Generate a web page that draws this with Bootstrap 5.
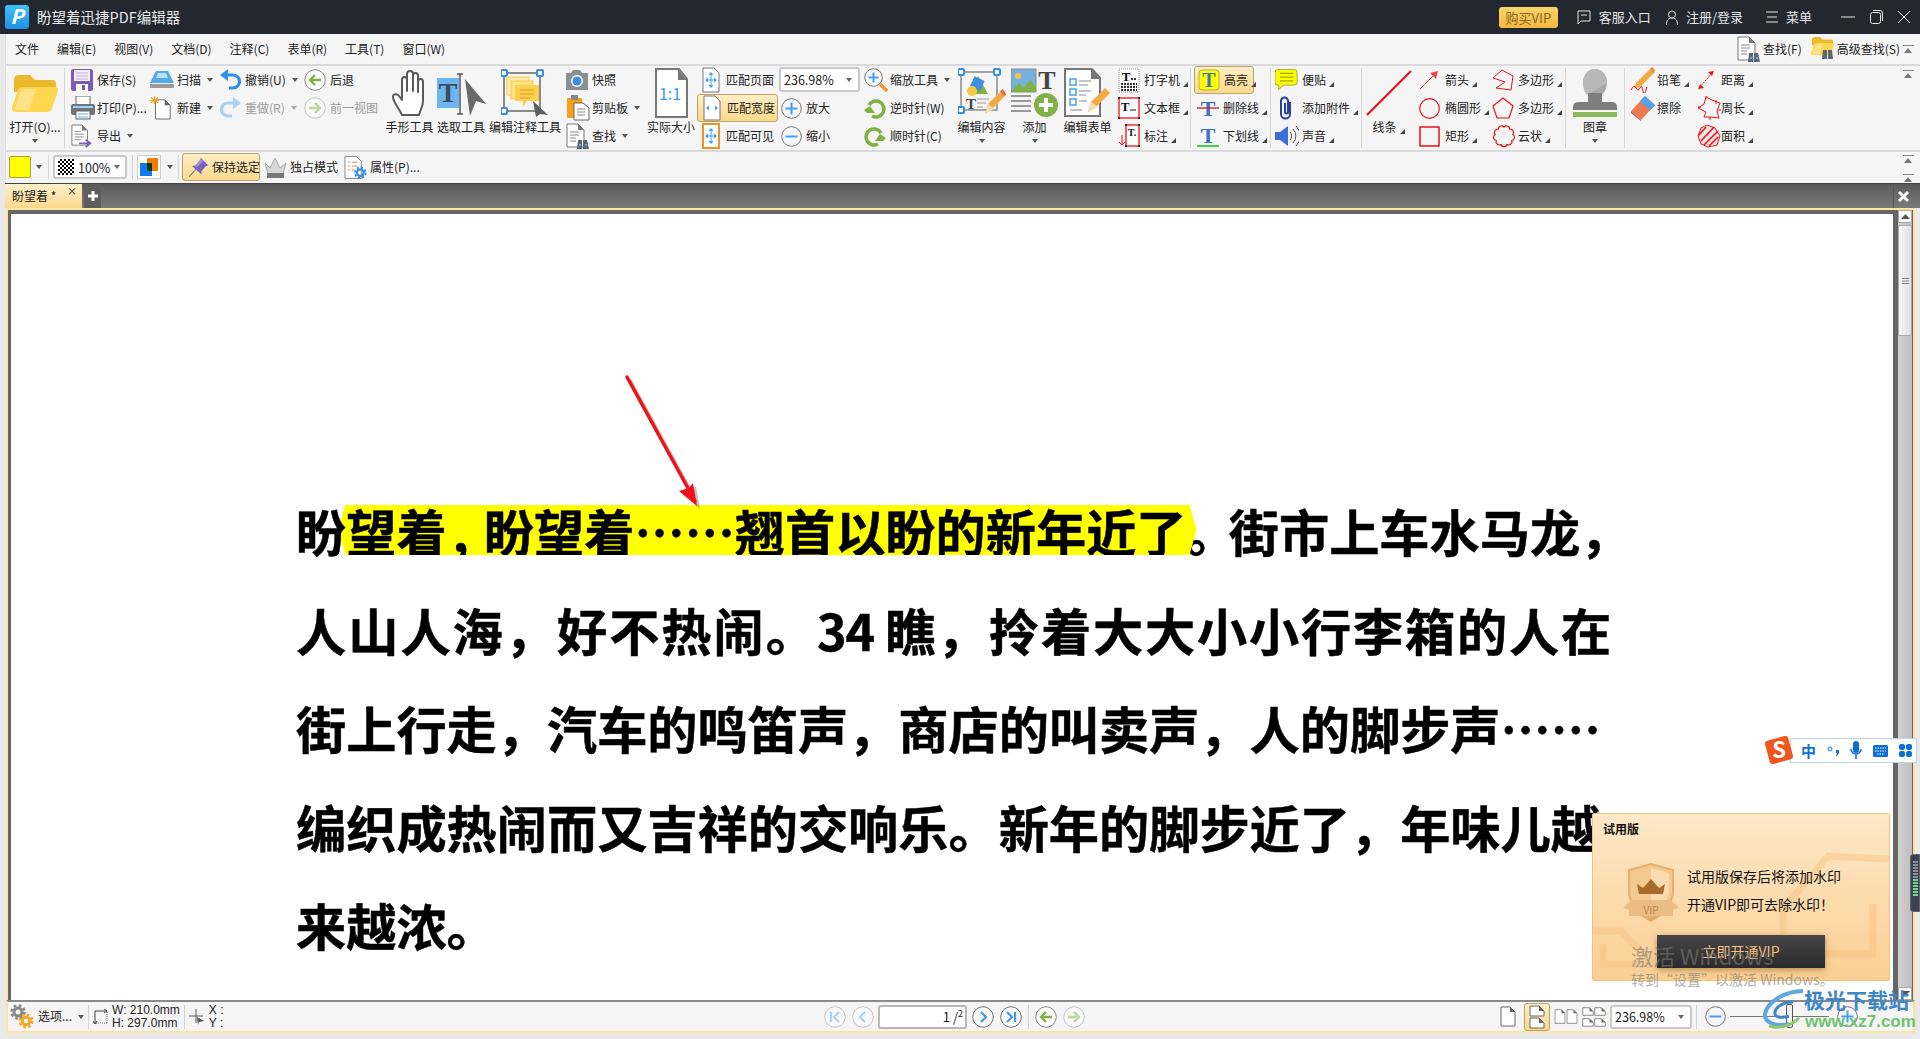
<!DOCTYPE html>
<html lang="zh-CN">
<head>
    <meta charset="UTF-8">
    <title>盼望着迅捷PDF编辑器</title>
    <link href="https://cdn.jsdelivr.net/npm/bootstrap@5.3.0/dist/css/bootstrap.min.css" rel="stylesheet">
    <style>
        html, body { margin: 0; height: 100%; overflow: hidden; background: #e9e9e9; }
        body, svg text { font-family: "Noto Sans CJK SC", "Liberation Sans", sans-serif; }
        svg text.sf { font-family: "Liberation Serif", serif; font-weight: 700; }
        body { font-size: 12px; color: #222; line-height: 1.2; }
        svg { display: block; flex: none; overflow: visible; }
        .appshell { width: 1920px; height: 1039px; position: relative; overflow: hidden; }

        /* title bar */
        .titlebar { height: 34px; background: #23272f; color: #e8e8e8; }
        .titlebar .apptitle { font-size: 14.5px; margin-left: 8px; }
        .logo-p { margin-left: 5px; }
        .vipbtn { width: 59px; height: 21px; margin-right: 19px; padding: 0; border: 0; border-radius: 3px; font-size: 13px; line-height: 21px; color: #8a6420; background: linear-gradient(#fbd46a, #f4b93f); }
        .vipbtn:hover { color: #8a6420; }
        .titlebar .tsp { font-size: 13px; margin-left: 8px; }
        .tgroup { margin-right: 15px; }
        .tgroup.wide { margin-right: 23px; }
        .winbtns { gap: 15px; margin-right: 10px; margin-left: 29px; }

        /* upper frame */
        .frame { margin-left: 5px; border-left: 1px solid #dcdcdc; background: #f5f5f5; }
        .menurow { height: 30px; padding-left: 9px; gap: 18px; font-size: 12px; }
        .menurow .findr { gap: 3px; }
        .upb { width: 11px; height: 8px; border-top: 1px solid #888; position: relative; margin: 0 6px 0 0; }
        .upb::after { content: ""; position: absolute; left: 1px; top: 2px; border: 4.5px solid transparent; border-top: 0; border-bottom: 5px solid #777; }
        .ribbon { height: 88px; border-top: 2px solid #dadada; border-bottom: 2px solid #dadada; }
        .rsep { width: 1px; height: 80px; margin-top: 2px; background: #d6d6d6; flex: none; }
        .rcol { flex: none; }
        .ritem { height: 28px; display: grid; grid-template-columns: var(--tx) auto auto; justify-content: start; align-items: center; white-space: nowrap; }
        .ritem > svg { margin-left: var(--px); }
        .ritem.off span { color: #9c9c9c; }
        .ritem.lit { background: linear-gradient(#fdeec4, #fbd98c); border: 1px solid #b9a36c; border-radius: 3px; }
        .crt { width: 0; height: 0; border: 3.5px solid transparent; border-bottom: 0; border-top: 4px solid #555; margin-left: 6px; display: block; }
        .crt.pale { border-top-color: #aaa; }
        .cnr { width: 0; height: 0; border-left: 5px solid transparent; border-bottom: 5px solid #444; margin: 8px 0 0 3px; display: block; }
        .bigt { display: flex; flex-direction: column; align-items: center; flex: none; padding-top: 2px; white-space: nowrap; }
        .bigt .bigbox { height: 50px; display: flex; align-items: center; }
        .bigt .biglab { height: 18px; line-height: 18px; display: flex; align-items: center; }
        .bigt .crt { margin: 3px 0 0; }
        .c0 { width: 58px; } .c1 { width: 81px; --tx: 32px; --px: 6px; } .c2 { width: 70px; --tx: 31px; --px: 4px; }
        .c3 { width: 84px; --tx: 29px; --px: 4px; } .c4 { width: 84px; --tx: 30px; --px: 4px; }
        .c5 { width: 51px; } .c6 { width: 52px; } .c7 { width: 76px; }
        .c8 { width: 82px; --tx: 29px; --px: 3px; } .c9 { width: 52px; }
        .c10 { width: 81px; --tx: 29px; --px: 5px; } .c11 { width: 84px; --tx: 28px; --px: 3px; }
        .c12 { width: 93px; --tx: 28px; --px: 2px; } .c13, .c14, .c15 { width: 53px; }
        .c16 { width: 76px; --tx: 30px; --px: 4px; } .c17 { width: 79px; --tx: 29px; --px: 3px; }
        .c17 .ritem { margin-left: 3px; } .c17 .ritem.lit { width: 60px; }
        .c18 { width: 90px; --tx: 31px; --px: 4px; } .c19 { width: 53px; }
        .c20 { width: 74px; --tx: 30px; --px: 4px; } .c21 { width: 76px; --tx: 29px; --px: 3px; }
        .c22 { width: 58px; } .c23 { width: 68px; --tx: 32px; --px: 6px; } .c24 { width: 74px; --tx: 28px; --px: 4px; }
        .combo { height: 25px; background: #fff; border: 2px solid #c9c9c9; border-radius: 3px; padding: 0 6px 0 3px; font-size: 12.5px; }
        .combo .crt { margin-left: auto; border-top-color: #666; }
        .c11 .combo { width: 81px; margin: 1px 0 2px 1px; }

        .tool2 { height: 31px; font-size: 12px; padding: 0 0 1px 3px; }
        .tool2 .vsep { width: 1px; height: 24px; background: #d4d4d4; flex: none; }
        .swatch { width: 22px; height: 22px; background: #ff0; border: 1px solid #a3a33a; border-radius: 2px; }
        .tool2 .combo { width: 74px; height: 24px; margin-left: 4px; gap: 4px; }
        .checker { width: 16px; height: 16px; background: conic-gradient(#000 25%, #fff 0 50%, #000 0 75%, #fff 0) 0 0 / 4px 4px; flex: none; }
        .colorbox { width: 24px; height: 24px; margin-left: 4px; padding: 2px; border: 1px solid #ccc; background: #fff; }
        .keepbtn { width: 78px; height: 28px; margin-left: 3px; padding-left: 6px; gap: 3px; background: linear-gradient(#fdeec4, #fbd98c); border: 1px solid #b9a36c; border-radius: 3px; white-space: nowrap; }
        .ml5 { margin-left: 5px; } .ml6 { margin-left: 6px; } .ml4 { margin-left: 4px; }
        .tool2 .tx { margin-left: 3px; white-space: nowrap; }
        .upstack { height: 31px; margin-left: auto; padding: 3px 0 1px; }

        /* tabs */
        .tabbar { height: 25px; background: linear-gradient(#555 0, #5f5f5f 10%, #7a7a7a 100%); border-top: 1px solid #444; margin-left: 5px; }
        .doctab { width: 77px; height: 24px; background: linear-gradient(#fdf0cb, #fdd98c); padding-left: 7px; font-size: 12px; position: relative; }
        .doctab .x { position: absolute; right: 5px; top: 1px; font-size: 10px; line-height: 12px; }
        .addtab { width: 17px; height: 24px; margin-left: 2px; background: #5e5e5e; }
        .closeall { width: 19px; margin-left: auto; margin-right: 8px; height: 24px; border-left: 1px solid #555; }

        /* document */
        .docarea { height: 792px; margin-left: 6px; margin-right: 5px; background: #666; border-left: 2px solid #fde3a0; border-top: 2px solid #fde3a0; border-right: 2px solid #fde3a0; }
        .docpage { width: 1882px; margin: 4px 0 0 3px; height: 786px; background: #fff; position: relative; overflow: hidden; padding: 267px 0 0 285px; }
        .docline { font-size: 50.2px; font-weight: 700; line-height: 98.6px; height: 98.6px; white-space: nowrap; color: #000; -webkit-text-stroke: .5px #000; }
        .ontop { position: relative; z-index: 1; }
        .hilite { margin: 0 -10px 0 -8px; padding: 0 10px 0 8px; background: linear-gradient(#ff0, #ff0) center / 100% 51px no-repeat; clip-path: polygon(0 50%, 7px 11px, calc(100% - 7px) 11px, 100% 50%, calc(100% - 7px) calc(100% - 11px), 7px calc(100% - 11px)); }
        .cma { margin-left: 6px; letter-spacing: 15px; }
        .dot-tight { letter-spacing: -8px; }
        .spread1 { letter-spacing: 2px; }
        .spread2 { letter-spacing: 1.8px; }
        .digits { margin: 0 11px 0 -1px; letter-spacing: -1px; }
        .redarrow { position: absolute; left: 600px; top: 150px; }
        .vscroll { width: 14px; margin-left: 5px; flex: none; background: linear-gradient(90deg, #d2d2d2, #bdbdbd); }
        .vscroll .sb { height: 13px; background: #fdfdfd; border: 1px solid #aaa; }
        .vscroll .thumb { height: 111px; margin-top: 2px; background: linear-gradient(90deg, #f6f6f6, #e0e0e0); border: 1px solid #aaa; }

        /* status bar */
        .statusbar { height: 33px; margin-left: 6px; margin-right: 5px; background: #f5f5f5; border-left: 2px solid #fde3a0; border-right: 2px solid #fde3a0; border-top: 2px solid #8a8a8a; border-bottom: 2px solid #fde3a0; font-size: 12px; }
        .stleft { width: 816px; flex: none; padding-left: 2px; }
        .stsep { width: 1px; height: 24px; background: #d4d4d4; flex: none; }
        .dim { font-family: "Liberation Sans", sans-serif; line-height: 13px; font-size: 12px; white-space: pre; }
        .pagein { width: 89px; height: 24px; margin: 0 5px 0 4px; background: #fff; border: 2px solid #b8b8b8; border-radius: 3px; padding-right: 2px; font-size: 13px; }
        .pagein sup { font-size: 9px; top: -.3em; }
        .navgap { gap: 6px; }
        .viewlit { width: 26px; height: 28px; background: linear-gradient(#fdeec4, #fbd98c); border: 1px solid #b9a36c; border-radius: 3px; }
        .pg-first { margin-left: 415px; }
        .pg-grid { display: grid; grid-template-columns: 12px 12px; }
        .strt .combo { width: 82px; height: 24px; }
        .sliderline { width: 99px; height: 1px; background: #777; position: relative; }
        .sliderline i { position: absolute; left: 56px; top: -12px; width: 7px; height: 24px; background: #f4f4f4; border: 1px solid #555; border-radius: 2px; }

        /* things floating over the window */
        .ime { position: absolute; left: 1790px; top: 738px; width: 127px; height: 25px; background: #fff; border: 1px solid #bcd4f2; padding-left: 10px; color: #0a6fd8; font-weight: 700; }
        .ime svg { margin-left: 11px; }
        .ime-s { position: absolute; left: 1764px; top: 735px; }
        .imezh { font-size: 15px; }
        .levelbar { position: absolute; left: 1910px; top: 854px; width: 10px; height: 58px; background: #3a4150; border-radius: 3px 0 0 3px; border: 1px solid #666; padding: 6px 1px 0 2px; }
        .levelbar i { display: block; height: 2px; margin-bottom: 1px; background: #8a8f99; }
        .levelbar i.g { background: #72d690; }
        .trialpop { position: absolute; left: 1592px; top: 813px; width: 298px; height: 168px; background: linear-gradient(#fde8c8, #fbcf92); border: 1px solid #f1c27f; border-radius: 2px; font-size: 14px; color: #111; }
        .trialpop .ttl { position: absolute; left: 10px; top: 8px; font-size: 12px; font-weight: 700; }
        .trialpop .msg { position: absolute; left: 94px; top: 48px; line-height: 28px; white-space: nowrap; }
        .trialpop .deco { position: absolute; left: 0; top: 0; }
        .trialpop .shield { position: absolute; left: 30px; top: 50px; }
        .openvip { position: absolute; left: 64px; top: 121px; width: 168px; height: 33px; border: 0; padding: 0; border-radius: 0; background: linear-gradient(#474747, #2a2a2a); color: #f3c27e; font-size: 14px; box-shadow: 0 2px 6px rgba(120,80,20,.5); }
        .wm-act { position: absolute; left: 1631px; top: 940px; color: rgba(120,120,120,.62); font-size: 22px; white-space: nowrap; line-height: 30px; }
        .wm-sub { position: absolute; left: 1631px; top: 969px; color: rgba(120,120,120,.62); font-size: 14px; white-space: nowrap; line-height: 20px; }
        .jg-logo { position: absolute; left: 1763px; top: 990px; }
        .jg-cn { position: absolute; left: 1804px; top: 984px; color: #3f86c9; font-size: 21px; font-weight: 700; white-space: nowrap; line-height: 30px; }
        .jg-en { position: absolute; left: 1805px; top: 1010px; color: #6fc36f; font-size: 17px; font-weight: 700; font-family: "Liberation Sans", sans-serif; white-space: nowrap; line-height: 24px; }
    </style>
</head>
<body>
<svg width="0" height="0" class="position-absolute">
    <defs>
        <symbol id="folder" viewBox="0 0 46 37"><path d="M2 5q0-5 5-5h11l5 5h17q4 0 4 4v8H2z" fill="#ecb92c"/><path d="M0 32L6 15q1-3 4-3h33q4 0 3 4l-6 17q-1 4-5 4H4q-5 0-4-5z" fill="#fdd74f"/><path d="M3 33L9 16q1-2 3-2h12L17 35H6q-4 0-3-2z" fill="#fee38a"/></symbol>
        <symbol id="save" viewBox="0 0 22 22"><rect width="22" height="22" rx="2" fill="#7a5cb9"/><rect x="3" y="1" width="16" height="11" fill="#f3f0fa"/><path d="M5 4h12M5 7h12M5 10h12" stroke="#b9add9"/><rect x="5" y="15" width="12" height="7" fill="#fff"/><rect x="11" y="16" width="3" height="5" fill="#7a5cb9"/></symbol>
        <symbol id="print" viewBox="0 0 24 24"><rect x="5" y="0" width="14" height="9" fill="#fff" stroke="#666"/><rect x="0" y="8" width="24" height="11" rx="2" fill="#6f7478"/><rect x="2" y="10" width="20" height="2" fill="#9fd0f5"/><rect x="5" y="15" width="14" height="8" fill="#fff" stroke="#666"/><path d="M7 18h10M7 21h10" stroke="#69aee8"/></symbol>
        <symbol id="scan" viewBox="0 0 24 18"><path d="M6 0h12l6 12H0z" fill="#53a9ee"/><path d="M8 2h8l2 5H6z" fill="#bfe0fa"/><rect y="13" width="24" height="4" rx="1" fill="#9a9a9a"/></symbol>
        <symbol id="newd" viewBox="0 0 24 26"><path d="M6 4h10l6 6v15H6z" fill="#fff" stroke="#666"/><path d="M16 4v6h6z" fill="#666"/><path d="M5 0v9M1 1.500l8 6M9 1.500l-8 6M0 4.500h10" stroke="#f4a11f" stroke-width="1.200"/></symbol>
        <symbol id="export" viewBox="0 0 24 26"><path d="M1 1h11l6 6v16H1z" fill="#fff" stroke="#777"/><path d="M12 1v6h6z" fill="#777"/><path d="M4 8h7M4 11h10M4 14h10M4 17h7" stroke="#888"/><path d="M9 21h11m-4-4l5 4-5 4" fill="none" stroke="#7a5cb9" stroke-width="2"/></symbol>
        <symbol id="undo" viewBox="0 0 21 22"><path d="M6 6h7a6 6 0 0 1 0 13H9" fill="none" stroke="#2f90e8" stroke-width="3.200"/><path d="M8 0v12L0 6z" fill="#2f90e8"/></symbol>
        <symbol id="redo" viewBox="0 0 21 22"><path d="M15 6H8a6 6 0 0 0 0 13h4" fill="none" stroke="#a8d3f6" stroke-width="3.200"/><path d="M13 0v12l8-6z" fill="#a8d3f6"/></symbol>
        <symbol id="back" viewBox="0 0 22 22"><circle cx="11" cy="11" r="10.300" fill="#fff" stroke="#888"/><path d="M17 11H6m5-5l-5 5 5 5" fill="none" stroke="#7fb143" stroke-width="2.400"/></symbol>
        <symbol id="fwd" viewBox="0 0 22 22"><circle cx="11" cy="11" r="10.300" fill="#fafafa" stroke="#c4c4c4"/><path d="M5 11h11m-5-5l5 5-5 5" fill="none" stroke="#bcd79a" stroke-width="2.400"/></symbol>
        <symbol id="hand" viewBox="0 0 36 48"><path d="M10 46C7 39 1 33 1 28c0-3 4-4 6-1l3 4V11c0-4 5-4 5 0v11V5c0-4 6-4 6 0v17V7c0-4 5-4 5 0v16V13c0-4 5-4 5 0v19c0 6-3 9-4 14z" fill="#fff" stroke="#5a5a5a" stroke-width="2" stroke-linejoin="round"/></symbol>
        <symbol id="sel" viewBox="0 0 49 48"><rect y="9" width="22" height="30" fill="#6cb5f2"/><text class="sf" x="11" y="33" text-anchor="middle" font-size="28" fill="#3d4b57">T</text><path d="M23 5v40M20 5h6M20 45h6" stroke="#555" stroke-width="1.500"/><path d="M28 10l21 25-10-3-6 15z" fill="#696969"/></symbol>
        <symbol id="annot" viewBox="0 0 48 48"><rect x="3" y="4" width="36" height="38" fill="none" stroke="#8a8a8a" stroke-width="2"/><g fill="#fff" stroke="#2f90e8" stroke-width="2"><rect x="0" y="1" width="6" height="6" rx="1"/><rect x="36" y="1" width="6" height="6" rx="1"/><rect x="0" y="39" width="6" height="6" rx="1"/></g><rect x="6" y="8" width="22" height="18" fill="#ffeeb0" stroke="#f4c64a"/><rect x="10" y="12" width="22" height="18" fill="#ffe28a" stroke="#f4c64a"/><path d="M14 16h24v16H26l-4 6v-6h-8z" fill="#fccf4c"/><path d="M19 21h14M19 25h14M19 29h10" stroke="#e39c25"/><path d="M32 32l15 14-8-1-4 3z" fill="#5e5e5e"/></symbol>
        <symbol id="cam" viewBox="0 0 22 20"><path d="M0 3h5l2-3h7l2 3h6v17H0z" fill="#8a8f93"/><circle cx="11" cy="11" r="6" fill="#fff"/><circle cx="11" cy="11" r="4.500" fill="#3d8fdf"/></symbol>
        <symbol id="clip" viewBox="0 0 24 26"><rect x="1" y="3" width="15" height="20" rx="1" fill="#f6a01e"/><rect x="5" y="0" width="7" height="5" fill="#888"/><path d="M8 8h9l6 5v12H8z" fill="#fff" stroke="#666"/><path d="M11 14h8M11 17h8M11 20h8" stroke="#888"/></symbol>
        <symbol id="find" viewBox="0 0 23 26"><path d="M1 1h11l6 6v17H1z" fill="#fff" stroke="#777"/><path d="M12 1v6h6z" fill="#777"/><path d="M4 9h9M4 12h9M4 15h6M4 18h6" stroke="#888"/><path d="M12 17h4v9h-5zM17 17h4l2 9h-6z" fill="#5a6670"/><path d="M13 22h2M19 22h2" stroke="#64a8e8" stroke-width="2"/></symbol>
        <symbol id="one" viewBox="0 0 34 50"><path d="M2 1h23l8 10v38H2z" fill="#fff" stroke="#777" stroke-width="2"/><path d="M24 1v11h9z" fill="#777"/><text x="16" y="32" text-anchor="middle" font-size="16" fill="#3a9bf0">1:1</text></symbol>
        <symbol id="fitp" viewBox="0 0 18 26"><path d="M1 1h11l5 5v19H1z" fill="#fff" stroke="#777"/><path d="M9 6v14M4 13h10" stroke="#45a1ef"/><path d="M9 5l-2.500 3h5zM9 21l-2.500-3h5zM3 13l3-2.500v5zM15 13l-3-2.500v5z" fill="#45a1ef"/></symbol>
        <symbol id="fitw" viewBox="0 0 18 26"><path d="M1 1h11l5 5v19H1z" fill="#fff" stroke="#777"/><path d="M3 13l3-2.500v5zM15 13l-3-2.500v5z" fill="#45a1ef"/></symbol>
        <symbol id="fitv" viewBox="0 0 18 26"><rect x="1" y="1" width="16" height="24" fill="#fff" stroke="#ef9322" stroke-width="2"/><path d="M9 6v14M4 13h10" stroke="#45a1ef"/><path d="M9 5l-2.500 3h5zM9 21l-2.500-3h5zM3 13l3-2.500v5zM15 13l-3-2.500v5z" fill="#45a1ef"/></symbol>
        <symbol id="plus" viewBox="0 0 21 21"><circle cx="10.500" cy="10.500" r="9.800" fill="#f6f6f6" stroke="#777"/><path d="M10.500 4.500v12M4.500 10.500h12" stroke="#45a1ef" stroke-width="2"/></symbol>
        <symbol id="minus" viewBox="0 0 21 21"><circle cx="10.500" cy="10.500" r="9.800" fill="#f6f6f6" stroke="#777"/><path d="M4.500 10.500h12" stroke="#45a1ef" stroke-width="2"/></symbol>
        <symbol id="zoomt" viewBox="0 0 24 24"><circle cx="9.500" cy="9.500" r="8.800" fill="#f6f6f6" stroke="#777"/><path d="M9.500 4.500v10M4.500 9.500h10" stroke="#45a1ef" stroke-width="2"/><path d="M16 16l7 7" stroke="#f0992a" stroke-width="3.500"/></symbol>
        <symbol id="ccw" viewBox="0 0 22 22"><path d="M5 8a8 8 0 1 1 3 11" fill="none" stroke="#7fb143" stroke-width="3.500"/><path d="M0 13l6-4 5 7H3z" fill="#7fb143"/></symbol>
        <symbol id="cw" viewBox="0 0 22 22"><path d="M17 8a8 8 0 1 0-3 11" fill="none" stroke="#7fb143" stroke-width="3.500"/><path d="M22 13l-6-4-5 7h8z" fill="#7fb143"/></symbol>
        <symbol id="edc" viewBox="0 0 48 50"><rect x="3" y="4" width="36" height="38" fill="none" stroke="#8a8a8a" stroke-width="1.500"/><g fill="#fff" stroke="#2f90e8" stroke-width="2"><rect x="0" y="1" width="6" height="6" rx="1"/><rect x="36" y="1" width="6" height="6" rx="1"/><rect x="0" y="39" width="6" height="6" rx="1"/></g><path d="M20 8l10 18H14z" fill="#7fb143"/><rect x="14" y="10" width="11" height="11" fill="#3d8fdf" transform="rotate(25 19 15)"/><circle cx="14" cy="23" r="5" fill="#f6c644"/><text class="sf" x="8" y="41" font-size="15" fill="#444">T</text><path d="M19 31h12M19 35h9M19 39h6" stroke="#999"/><path d="M27 46l3-10 14-14 4 5-14 14z" fill="#f5a943"/><path d="M42 23l3-2 3 5-2 2z" fill="#ea6a4f"/><path d="M27 46l3-10 6 5z" fill="#f6dcb2"/></symbol>
        <symbol id="addc" viewBox="0 0 47 50"><rect y="1" width="25" height="23" fill="#78b0dd" stroke="#8a8a8a"/><circle cx="7" cy="8" r="3" fill="#f6c644"/><path d="M0 24l8-9 5 5 6-8 6 7v5z" fill="#7fb143"/><text class="sf" x="36" y="21" text-anchor="middle" font-size="26" fill="#444">T</text><path d="M0 28h20M0 33h20M0 38h20M0 43h20" stroke="#999" stroke-width="1.800"/><circle cx="35" cy="37" r="12" fill="#80b248"/><path d="M35 30v14M28 37h14" stroke="#fff" stroke-width="4"/></symbol>
        <symbol id="edf" viewBox="0 0 47 50"><path d="M1 1h27l8 9v38H1z" fill="#fff" stroke="#777" stroke-width="2"/><path d="M27 1v10h9z" fill="#777"/><g fill="none" stroke="#45a1ef" stroke-width="1.500"><rect x="6" y="11" width="6" height="6"/><rect x="6" y="21" width="6" height="6"/><rect x="6" y="31" width="6" height="6"/></g><path d="M15 13h12M15 17h9M15 23h12M15 27h7M15 33h8M6 42h12" stroke="#888"/><path d="M24 44l3-10 14-14 5 5-14 14z" fill="#f5a943"/><path d="M24 44l3-10 7 5z" fill="#f6dcb2"/></symbol>
        <symbol id="typ" viewBox="0 0 22 25"><rect x="1" y="1" width="20" height="23" fill="#fff" stroke="#999" stroke-dasharray="1 1"/><text class="sf" x="8" y="13" text-anchor="middle" font-size="13" fill="#111">T</text><path d="M13 11h6M3 16h16M3 19h16M3 22h16" stroke="#333" stroke-width="2" stroke-dasharray="2 1"/></symbol>
        <symbol id="tb" viewBox="0 0 22 22"><rect x="1" y="1" width="20" height="20" fill="#fff" stroke="#e11" stroke-width="1.300"/><text class="sf" x="7" y="14" text-anchor="middle" font-size="13" fill="#111">T</text><path d="M12 13h6" stroke="#111"/><g fill="#333"><rect width="2" height="2"/><rect x="20" width="2" height="2"/><rect y="20" width="2" height="2"/><rect x="20" y="20" width="2" height="2"/></g></symbol>
        <symbol id="call" viewBox="0 0 22 24"><rect x="8" y="1" width="13" height="21" fill="#fff" stroke="#e11" stroke-width="1.300"/><text class="sf" x="14" y="12" text-anchor="middle" font-size="10" fill="#111">T.</text><path d="M4 11v10m-3-3l3 3 3-3" fill="none" stroke="#e11"/><g fill="#333"><rect x="7" width="2" height="2"/><rect x="20" width="2" height="2"/><rect x="7" y="21" width="2" height="2"/><rect x="20" y="21" width="2" height="2"/></g></symbol>
        <symbol id="thl" viewBox="0 0 22 22"><rect x="1" y="1" width="20" height="20" rx="3" fill="#ff0" stroke="#b5b04a"/><text class="sf" x="11" y="18" text-anchor="middle" font-size="20" fill="#3973c4">T</text></symbol>
        <symbol id="tst" viewBox="0 0 22 22"><text class="sf" x="11" y="19" text-anchor="middle" font-size="22" fill="#3973c4">T</text><path d="M0 11h22" stroke="#d8222a" stroke-width="1.400"/></symbol>
        <symbol id="tun" viewBox="0 0 22 22"><text class="sf" x="11" y="18" text-anchor="middle" font-size="22" fill="#3973c4">T</text><path d="M0 21h22" stroke="#2fd02f" stroke-width="1.800"/></symbol>
        <symbol id="note" viewBox="0 0 24 22"><path d="M3 0h18q3 0 3 3v11q0 3-3 3H9l-5 5v-5H3q-3 0-3-3V3q0-3 3-3z" fill="#ff0" stroke="#a3a33a" transform="scale(.96)"/><path d="M5 4h14M5 8h14M5 12h14" stroke="#888800"/></symbol>
        <symbol id="att" viewBox="0 0 12 24"><path d="M10 6v12a4.500 4.500 0 0 1-9 0V5a3.500 3.500 0 0 1 7 0v11a1.500 1.500 0 0 1-3 0V7" fill="none" stroke="#2b3f9e" stroke-width="2"/></symbol>
        <symbol id="spk" viewBox="0 0 24 22"><path d="M0 7h5l8-6v20l-8-6H0z" fill="#3f6fd6"/><path d="M15 7a6 6 0 0 1 0 8M18 4a10 10 0 0 1 0 14M21 1a14 14 0 0 1 0 20" fill="none" stroke="#555"/></symbol>
        <symbol id="line" viewBox="0 0 46 46"><path d="M1 45L45 1" stroke="#e8131a" stroke-width="2.200"/></symbol>
        <symbol id="arrow" viewBox="0 0 20 20"><path d="M1 19L18 2" stroke="#e8474c"/><path d="M19 1l-8 2 6 6z" fill="#e8474c"/></symbol>
        <symbol id="polyo" viewBox="0 0 22 22"><path d="M10 1l11 6-2 14-15-2 9-6L1 9z" fill="none" stroke="#e8131a" stroke-linejoin="round"/></symbol>
        <symbol id="ell" viewBox="0 0 21 21"><circle cx="10.500" cy="10.500" r="9.800" fill="none" stroke="#e8131a" stroke-width="1.200"/></symbol>
        <symbol id="penta" viewBox="0 0 22 22"><path d="M11 1l10 8-4 12H5L1 9z" fill="none" stroke="#e8131a" stroke-width="1.200"/></symbol>
        <symbol id="rect" viewBox="0 0 21 21"><rect x="1" y="1" width="19" height="19" fill="none" stroke="#e8131a" stroke-width="1.500"/></symbol>
        <symbol id="cloud" viewBox="0 0 24 24"><path d="M12 3A3.300 3.300 0 0 1 17.800 5.100A3.300 3.300 0 0 1 20.900 10.400A3.300 3.300 0 0 1 19.800 16.500A3.300 3.300 0 0 1 15.100 20.500A3.300 3.300 0 0 1 8.900 20.500A3.300 3.300 0 0 1 4.200 16.500A3.300 3.300 0 0 1 3.100 10.400A3.300 3.300 0 0 1 6.200 5.100A3.300 3.300 0 0 1 12 3z" fill="none" stroke="#e8131a" stroke-width="1.200"/></symbol>
        <symbol id="stamp" viewBox="0 0 44 48"><ellipse cx="22" cy="14" rx="12" ry="14" fill="#a9a9a9"/><path d="M22 0a12 14 0 0 1 12 14L14 26Q10 20 10 14A12 14 0 0 1 22 0z" fill="#b8b8b8"/><path d="M15 24h14v9h9q6 0 6 5v3H0v-3q0-5 6-5h9z" fill="#7e7e7e"/><rect y="43" width="44" height="5" fill="#8eb85c"/></symbol>
        <symbol id="pen" viewBox="0 0 24 26"><path d="M5 16L20 1l4 4L9 20l-6 1z" fill="#f5a943"/><path d="M19 2l2-2 3 3-2 3z" fill="#ea8a3f"/><path d="M0 23q3-6 5-2t4 0 3 3 4-4" fill="none" stroke="#e8131a"/></symbol>
        <symbol id="erase" viewBox="0 0 24 26"><path d="M0 16L14 1l10 9L10 25z" fill="#ee7a55"/><path d="M9 6L14 1l10 9-5 5z" fill="#4ea4ea"/><path d="M0 16l10 9v1L0 18z" fill="#b55"/></symbol>
        <symbol id="dist" viewBox="0 0 18 20"><path d="M2 18L16 2" stroke="#e8131a" stroke-dasharray="2 1"/><path d="M17 1l-6 1 4 4zM1 19l6-1-4-4z" fill="#e8131a"/></symbol>
        <symbol id="peri" viewBox="0 0 24 24"><path d="M9 1l6 3 8 3-3 8 2 7-9-1H7l2-5-8-4 6-4z" fill="none" stroke="#e8131a"/><path d="M9 0v3M19 4v4M21 14h3M13 21v3M1 11h3" stroke="#e8131a"/></symbol>
        <symbol id="area" viewBox="0 0 24 24"><path d="M10 1l8 3 5 8-3 9-9 2-7-3-3-8 3-8z" fill="#fde5e5" stroke="#e8131a"/><path d="M4 17L17 3M7 21L21 7M12 22l9-9M2 11L9 3" stroke="#e8131a" stroke-width="1.600"/></symbol>
        <symbol id="pin" viewBox="0 0 24 24"><path d="M0 24l9-10" stroke="#888" stroke-width="1.600"/><path d="M14 1l9 9-3 1-5 6 0 4L4 11l4-1 5-5z" fill="#7d5fc0"/><path d="M14 2l3 3-7 7-3-1z" fill="#a58ddc"/></symbol>
        <symbol id="crown" viewBox="0 0 23 23"><path d="M1 7l5 5 5-10 5 10 6-5-3 11H4z" fill="#d6d6d6" stroke="#aaa"/><rect x="3" y="17" width="17" height="5" fill="#777"/></symbol>
        <symbol id="prop" viewBox="0 0 24 25"><path d="M1 1h12l5 5v18H1z" fill="#fff" stroke="#888"/><path d="M4 7h2M8 7h6M4 11h2M8 11h6M4 15h2M8 15h3" stroke="#d85"/><g transform="translate(17 18)"><circle r="3.500" fill="none" stroke="#3f8fe0" stroke-width="2.500"/><circle r="5.500" fill="none" stroke="#3f8fe0" stroke-width="2" stroke-dasharray="2.300 2"/></g></symbol>
        <symbol id="gear" viewBox="0 0 24 26"><g transform="translate(8 8)"><circle r="4" fill="none" stroke="#888" stroke-width="3"/><circle r="6.500" fill="none" stroke="#888" stroke-width="2.500" stroke-dasharray="2.600 2.500"/></g><g transform="translate(16 17)"><circle r="3.800" fill="none" stroke="#f6a623" stroke-width="3"/><circle r="6.300" fill="none" stroke="#f6a623" stroke-width="2.500" stroke-dasharray="2.500 2.450"/></g></symbol>
        <symbol id="size" viewBox="0 0 15 16"><path d="M2 6V2h11M11 0l3 2-3 2M2 6v9M0 12l2 3 2-3" fill="none" stroke="#444"/><path d="M3 14h12M14 3v11" stroke="#666" stroke-dasharray="1 1"/></symbol>
        <symbol id="cross" viewBox="0 0 16 16"><path d="M7 0v14M0 7h14" stroke="#555"/><path d="M8 8l7 4-5 1-1 3z" fill="#555"/></symbol>
        <symbol id="first" viewBox="0 0 22 22"><circle cx="11" cy="11" r="10.300" fill="#fafafa" stroke="#c4c4c4"/><path d="M7 6v10M15 6l-5 5 5 5" fill="none" stroke="#a8d3f6" stroke-width="2.200"/></symbol>
        <symbol id="prev" viewBox="0 0 22 22"><circle cx="11" cy="11" r="10.300" fill="#fafafa" stroke="#c4c4c4"/><path d="M13 6l-5 5 5 5" fill="none" stroke="#a8d3f6" stroke-width="2.200"/></symbol>
        <symbol id="next" viewBox="0 0 22 22"><circle cx="11" cy="11" r="10.300" fill="#fafafa" stroke="#777"/><path d="M9 6l5 5-5 5" fill="none" stroke="#3f9af0" stroke-width="2.200"/></symbol>
        <symbol id="last" viewBox="0 0 22 22"><circle cx="11" cy="11" r="10.300" fill="#fafafa" stroke="#777"/><path d="M15 6v10M7 6l5 5-5 5" fill="none" stroke="#3f9af0" stroke-width="2.200"/></symbol>
        <symbol id="pg" viewBox="0 0 16 21"><path d="M1 1h9l5 5v14H1z" fill="#fff" stroke="#666"/><path d="M10 1v5h5z" fill="#666"/></symbol>
        <symbol id="pgc" viewBox="0 0 16 12"><path d="M1 1h9l5 5v5H1z" fill="#fff" stroke="#666"/><path d="M10 1v5h5z" fill="#666"/></symbol>
    </defs>
</svg>

<div class="appshell">
    <div class="titlebar d-flex align-items-center">
        <svg class="logo-p" width="24" height="24"><defs><linearGradient id="lg" x1="0" y1="0" x2="0" y2="1"><stop offset="0" stop-color="#3ec3f5"/><stop offset="1" stop-color="#1e90e8"/></linearGradient></defs><rect width="24" height="24" rx="3" fill="url(#lg)"/><text x="12" y="19" text-anchor="middle" font-size="20" font-weight="700" font-style="italic" fill="#fff">P</text></svg>
        <span class="apptitle">盼望着迅捷PDF编辑器</span>
        <div class="ms-auto d-flex align-items-center">
            <button class="btn vipbtn" type="button">购买VIP</button>
            <div class="d-flex align-items-center tgroup"><svg width="14" height="15" fill="none" stroke="#e8e8e8"><path d="M1 1h12v10H4l-3 3z"/><path d="M4 5h6"/></svg><span class="tsp">客服入口</span></div>
            <div class="d-flex align-items-center tgroup wide"><svg width="12" height="15" fill="none" stroke="#e8e8e8"><circle cx="6" cy="4.500" r="3.500"/><path d="M.500 15c0-5 2-7 5.500-7s5.500 2 5.500 7"/></svg><span class="tsp">注册/登录</span></div>
            <div class="d-flex align-items-center"><svg width="12" height="12" stroke="#e8e8e8"><path d="M0 1h12M1 6h10M0 11h12"/></svg><span class="tsp">菜单</span></div>
            <div class="d-flex align-items-center winbtns">
                <svg width="14" height="14" stroke="#e8e8e8"><path d="M0 7h14"/></svg>
                <svg width="13" height="14" fill="none" stroke="#e8e8e8"><rect x=".5" y="2.500" width="10" height="11" rx="2"/><path d="M3 .5h7q2.500 0 2.500 2.500v8"/></svg>
                <svg width="12" height="12" stroke="#e8e8e8"><path d="M0 0l12 12M12 0L0 12"/></svg>
            </div>
        </div>
    </div>

    <div class="frame">
        <div class="menurow d-flex align-items-center">
            <span>文件</span><span>编辑(E)</span><span>视图(V)</span><span>文档(D)</span><span>注释(C)</span><span>表单(R)</span><span>工具(T)</span><span>窗口(W)</span>
            <div class="ms-auto d-flex align-items-center findr">
                <svg width="23" height="26"><use href="#find"/></svg><span>查找(F)</span>
                <svg class="ml6" width="23" height="24" viewBox="0 0 46 48"><use href="#folder" width="46" height="37"/><path d="M24 26h8v18H22zM34 26h8l2 18H34z" fill="#5a6670"/></svg><span>高级查找(S)</span>
                <div class="upb"></div>
            </div>
        </div>

        <div class="ribbon d-flex">
            <div class="bigt c0"><div class="bigbox"><svg width="46" height="37"><use href="#folder"/></svg></div><div class="biglab">打开(O)...</div><i class="crt"></i></div>
            <div class="rsep"></div>
            <div class="rcol c1">
                <div class="ritem"><svg width="22" height="22"><use href="#save"/></svg><span>保存(S)</span></div>
                <div class="ritem"><svg width="24" height="24"><use href="#print"/></svg><span>打印(P)...</span></div>
                <div class="ritem"><svg width="22" height="24"><use href="#export"/></svg><span>导出</span><i class="crt"></i></div>
            </div>
            <div class="rcol c2">
                <div class="ritem"><svg width="24" height="18"><use href="#scan"/></svg><span>扫描</span><i class="crt"></i></div>
                <div class="ritem"><svg width="22" height="26"><use href="#newd"/></svg><span>新建</span><i class="crt"></i></div>
            </div>
            <div class="rcol c3">
                <div class="ritem"><svg width="21" height="22"><use href="#undo"/></svg><span>撤销(U)</span><i class="crt"></i></div>
                <div class="ritem off"><svg width="21" height="22"><use href="#redo"/></svg><span>重做(R)</span><i class="crt pale"></i></div>
            </div>
            <div class="rcol c4">
                <div class="ritem"><svg width="22" height="22"><use href="#back"/></svg><span>后退</span></div>
                <div class="ritem off"><svg width="22" height="22"><use href="#fwd"/></svg><span>前一视图</span></div>
            </div>
            <div class="bigt c5"><div class="bigbox"><svg width="36" height="48"><use href="#hand"/></svg></div><div class="biglab">手形工具</div></div>
            <div class="bigt c6"><div class="bigbox"><svg width="49" height="48"><use href="#sel"/></svg></div><div class="biglab">选取工具</div></div>
            <div class="bigt c7"><div class="bigbox"><svg width="48" height="48"><use href="#annot"/></svg></div><div class="biglab">编辑注释工具</div></div>
            <div class="rcol c8">
                <div class="ritem"><svg width="22" height="20"><use href="#cam"/></svg><span>快照</span></div>
                <div class="ritem"><svg width="24" height="26"><use href="#clip"/></svg><span>剪贴板</span><i class="crt"></i></div>
                <div class="ritem"><svg width="23" height="26"><use href="#find"/></svg><span>查找</span><i class="crt"></i></div>
            </div>
            <div class="bigt c9"><div class="bigbox"><svg width="34" height="50"><use href="#one"/></svg></div><div class="biglab">实际大小</div></div>
            <div class="rcol c10">
                <div class="ritem"><svg width="18" height="26"><use href="#fitp"/></svg><span>匹配页面</span></div>
                <div class="ritem lit"><svg width="18" height="26"><use href="#fitw"/></svg><span>匹配宽度</span></div>
                <div class="ritem"><svg width="18" height="26"><use href="#fitv"/></svg><span>匹配可见</span></div>
            </div>
            <div class="rcol c11">
                <div class="combo d-flex align-items-center"><span>236.98%</span><i class="crt"></i></div>
                <div class="ritem"><svg width="21" height="21"><use href="#plus"/></svg><span>放大</span></div>
                <div class="ritem"><svg width="21" height="21"><use href="#minus"/></svg><span>缩小</span></div>
            </div>
            <div class="rcol c12">
                <div class="ritem"><svg width="24" height="24"><use href="#zoomt"/></svg><span>缩放工具</span><i class="crt"></i></div>
                <div class="ritem"><svg width="22" height="22"><use href="#ccw"/></svg><span>逆时针(W)</span></div>
                <div class="ritem"><svg width="22" height="22"><use href="#cw"/></svg><span>顺时针(C)</span></div>
            </div>
            <div class="bigt c13"><div class="bigbox"><svg width="48" height="50"><use href="#edc"/></svg></div><div class="biglab">编辑内容</div><i class="crt"></i></div>
            <div class="bigt c14"><div class="bigbox"><svg width="47" height="50"><use href="#addc"/></svg></div><div class="biglab">添加</div><i class="crt"></i></div>
            <div class="bigt c15"><div class="bigbox"><svg width="47" height="50"><use href="#edf"/></svg></div><div class="biglab">编辑表单</div></div>
            <div class="rcol c16">
                <div class="ritem"><svg width="22" height="25"><use href="#typ"/></svg><span>打字机</span><i class="cnr"></i></div>
                <div class="ritem"><svg width="22" height="22"><use href="#tb"/></svg><span>文本框</span><i class="cnr"></i></div>
                <div class="ritem"><svg width="22" height="24"><use href="#call"/></svg><span>标注</span><i class="cnr"></i></div>
            </div>
            <div class="rsep"></div>
            <div class="rcol c17">
                <div class="ritem lit"><svg width="22" height="22"><use href="#thl"/></svg><span>高亮</span><i class="cnr"></i></div>
                <div class="ritem"><svg width="22" height="22"><use href="#tst"/></svg><span>删除线</span><i class="cnr"></i></div>
                <div class="ritem"><svg width="22" height="22"><use href="#tun"/></svg><span>下划线</span><i class="cnr"></i></div>
            </div>
            <div class="rsep"></div>
            <div class="rcol c18">
                <div class="ritem"><svg width="23" height="22"><use href="#note"/></svg><span>便贴</span><i class="cnr"></i></div>
                <div class="ritem"><svg width="22" height="24"><use href="#att"/></svg><span>添加附件</span><i class="cnr"></i></div>
                <div class="ritem"><svg width="24" height="22"><use href="#spk"/></svg><span>声音</span><i class="cnr"></i></div>
            </div>
            <div class="rsep"></div>
            <div class="bigt c19"><div class="bigbox"><svg width="46" height="46"><use href="#line"/></svg></div><div class="biglab"><span>线条</span><i class="cnr"></i></div></div>
            <div class="rcol c20">
                <div class="ritem"><svg width="20" height="20"><use href="#arrow"/></svg><span>箭头</span><i class="cnr"></i></div>
                <div class="ritem"><svg width="21" height="21"><use href="#ell"/></svg><span>椭圆形</span><i class="cnr"></i></div>
                <div class="ritem"><svg width="21" height="21"><use href="#rect"/></svg><span>矩形</span><i class="cnr"></i></div>
            </div>
            <div class="rcol c21">
                <div class="ritem"><svg width="22" height="22"><use href="#polyo"/></svg><span>多边形</span><i class="cnr"></i></div>
                <div class="ritem"><svg width="22" height="22"><use href="#penta"/></svg><span>多边形</span><i class="cnr"></i></div>
                <div class="ritem"><svg width="24" height="24"><use href="#cloud"/></svg><span>云状</span><i class="cnr"></i></div>
            </div>
            <div class="rsep"></div>
            <div class="bigt c22"><div class="bigbox"><svg width="44" height="48"><use href="#stamp"/></svg></div><div class="biglab">图章</div><i class="crt"></i></div>
            <div class="rsep"></div>
            <div class="rcol c23">
                <div class="ritem"><svg width="24" height="26"><use href="#pen"/></svg><span>铅笔</span><i class="cnr"></i></div>
                <div class="ritem"><svg width="24" height="26"><use href="#erase"/></svg><span>擦除</span></div>
            </div>
            <div class="rcol c24">
                <div class="ritem"><svg width="18" height="20"><use href="#dist"/></svg><span>距离</span><i class="cnr"></i></div>
                <div class="ritem"><svg width="24" height="24"><use href="#peri"/></svg><span>周长</span><i class="cnr"></i></div>
                <div class="ritem"><svg width="24" height="24"><use href="#area"/></svg><span>面积</span><i class="cnr"></i></div>
            </div>
            <div class="ms-auto pt-1"><div class="upb"></div></div>
        </div>

        <div class="tool2 d-flex align-items-center">
            <div class="swatch"></div><i class="crt ml5"></i>
            <div class="vsep ml6"></div>
            <div class="combo d-flex align-items-center"><div class="checker"></div><span>100%</span><i class="crt"></i></div>
            <div class="vsep ml5"></div>
            <div class="colorbox"><svg width="18" height="18"><rect x="7" width="11" height="13" fill="#f47a00"/><rect y="5" width="12" height="13" fill="#0a7af0"/><rect x="7" y="5" width="5" height="8" fill="#003a12"/></svg></div><i class="crt ml6"></i>
            <div class="vsep ml5"></div>
            <div class="keepbtn d-flex align-items-center"><svg width="20" height="20" viewBox="0 0 24 24"><use href="#pin" width="24" height="24"/></svg><span>保持选定</span></div>
            <svg class="ml4" width="23" height="23"><use href="#crown"/></svg><span class="tx">独占模式</span>
            <svg class="ml6" width="23" height="25"><use href="#prop"/></svg><span class="tx">属性(P)...</span>
            <div class="upstack d-flex flex-column justify-content-between"><div class="upb"></div><div class="upb"></div></div>
        </div>
    </div>

    <div class="tabbar d-flex">
        <div class="doctab d-flex align-items-center">盼望着 *<span class="x">×</span></div>
        <div class="addtab d-flex align-items-center justify-content-center"><svg width="10" height="10" stroke="#fff" stroke-width="3"><path d="M5 0v10M0 5h10"/></svg></div>
        <div class="closeall d-flex align-items-center justify-content-center"><svg width="11" height="11" stroke="#fff" stroke-width="3"><path d="M1 1l9 9M10 1l-9 9"/></svg></div>
    </div>

    <div class="docarea d-flex">
        <div class="docpage">
            <div class="docline"><span class="ontop">盼</span><span class="hilite">望着<span class="cma">,</span>盼望着……翘首以盼的新年近了</span><span class="dot-tight">。</span>街市上车水马龙，</div>
            <div class="docline"><span class="spread1">人山人海，好不热闹。</span><span class="digits">34</span><span class="spread2">瞧，拎着大大小小行李箱的人在</span></div>
            <div class="docline">街上行走，汽车的鸣笛声，商店的叫卖声，人的脚步声……</div>
            <div class="docline">编织成热闹而又吉祥的交响乐。新年的脚步近了，年味儿越</div>
            <div class="docline">来越浓。</div>
            <svg class="redarrow" width="110" height="150" viewBox="0 0 110 150">
                <g transform="translate(3 3)" opacity=".35"><path d="M16 13L84 137" stroke="#555" stroke-width="3.500"/><path d="M86 142L68 127 78 124 82 119z" fill="#555"/></g>
                <path d="M16 13L84 137" stroke="#f0101a" stroke-width="3.500" stroke-linecap="round"/>
                <path d="M86 142L68 127 78 124 82 119z" fill="#f0101a"/>
            </svg>
        </div>
        <div class="vscroll d-flex flex-column">
            <div class="sb d-flex align-items-center justify-content-center"><svg width="9" height="5"><path d="M0 5L4.500 0 9 5z" fill="#555"/></svg></div>
            <div class="thumb d-flex align-items-center justify-content-center"><svg width="7" height="6" stroke="#888"><path d="M0 .5h7M0 3h7M0 5.500h7"/></svg></div>
            <div class="sb mt-auto d-flex align-items-center justify-content-center"><svg width="9" height="5"><path d="M0 0L4.500 5 9 0z" fill="#555"/></svg></div>
        </div>
    </div>

    <div class="statusbar d-flex align-items-center">
        <div class="stleft d-flex align-items-center">
            <svg width="24" height="26"><use href="#gear"/></svg>
            <span class="ms-1">选项...</span><i class="crt"></i>
            <div class="stsep ms-1"></div>
            <svg class="ms-1" width="15" height="16"><use href="#size"/></svg>
            <div class="dim ms-1">W: 210.0mm<br>H: 297.0mm</div>
            <div class="stsep ms-1"></div>
            <svg class="ms-1" width="16" height="16"><use href="#cross"/></svg>
            <div class="dim ms-1">X :<br>Y :</div>
        </div>
        <div class="d-flex align-items-center navgap">
            <svg width="22" height="22"><use href="#first"/></svg>
            <svg width="22" height="22"><use href="#prev"/></svg>
        </div>
        <div class="pagein d-flex align-items-center justify-content-end">1 / <sup>2</sup></div>
        <div class="d-flex align-items-center navgap">
            <svg width="22" height="22"><use href="#next"/></svg>
            <svg width="22" height="22"><use href="#last"/></svg>
            <div class="stsep"></div>
            <svg width="22" height="22"><use href="#back"/></svg>
            <svg width="22" height="22"><use href="#fwd"/></svg>
        </div>
        <div class="strt d-flex align-items-center">
            <svg class="pg-first" width="16" height="21"><use href="#pg"/></svg>
            <div class="viewlit d-flex flex-column align-items-center justify-content-center ms-2"><svg width="16" height="12"><use href="#pgc"/></svg><svg width="16" height="12"><use href="#pgc"/></svg></div>
            <svg class="ms-1" width="12" height="15" viewBox="0 0 16 21"><use href="#pg" width="16" height="21"/></svg>
            <svg width="12" height="15" viewBox="0 0 16 21"><use href="#pg" width="16" height="21"/></svg>
            <div class="pg-grid ms-1"><svg width="12" height="11"><use href="#pgc"/></svg><svg width="12" height="11"><use href="#pgc"/></svg><svg width="12" height="11"><use href="#pgc"/></svg><svg width="12" height="11"><use href="#pgc"/></svg></div>
            <div class="combo d-flex align-items-center ms-1"><span>236.98%</span><i class="crt"></i></div>
            <div class="stsep ms-1"></div>
            <svg class="ms-2" width="21" height="21"><use href="#minus"/></svg>
            <div class="sliderline ms-1"><i></i></div>
            <svg class="ms-2" width="21" height="21"><use href="#plus"/></svg>
        </div>
    </div>

    <!-- floating windows over the app -->
    <div class="ime d-flex align-items-center">
        <span class="imezh">中</span>
        <svg width="12" height="12" fill="#0a6fd8"><circle cx="3" cy="4" r="2" fill="none" stroke="#0a6fd8"/><path d="M9 5h3v3l-2 3H9l1-3H9z"/></svg>
        <svg width="12" height="19" fill="#0a6fd8"><rect x="3" width="6" height="12" rx="3"/><path d="M1 8a5 5 0 0 0 10 0M6 13v5" fill="none" stroke="#0a6fd8" stroke-width="1.500"/></svg>
        <svg width="15" height="12"><rect width="15" height="12" rx="1.500" fill="#0a6fd8"/><path d="M2 3h11M2 6h11M4 9h7" stroke="#fff" stroke-dasharray="1.500 1"/></svg>
        <svg width="13" height="13" fill="#0a6fd8"><rect width="6" height="6" rx="2"/><rect x="7" width="6" height="6" rx="2"/><rect y="7" width="6" height="6" rx="2"/><rect x="7" y="7" width="6" height="6" rx="2"/></svg>
    </div>
    <svg class="ime-s" width="30" height="30"><rect x="3" y="3" width="24" height="24" rx="3" fill="#f2551d" transform="rotate(-15 15 15)"/><text x="15" y="23" text-anchor="middle" font-size="22" font-weight="700" fill="#fff">S</text></svg>
    <div class="levelbar"><i></i><i></i><i></i><i></i><i></i><i></i><i class="g"></i><i class="g"></i><i class="g"></i><i class="g"></i><i class="g"></i><i class="g"></i></div>

    <div class="trialpop">
        <svg class="deco" width="296" height="166" fill="none" stroke="#f5bf7a" stroke-opacity=".4" stroke-width="7"><path d="M296 45L235 42 190 95v60"/><path d="M0 117h28l30 30M10 130v20h50"/><path d="M280 90v50h-60"/></svg>
        <span class="ttl">试用版</span>
        <svg class="shield" width="56" height="58">
            <path d="M28 0l22 6v22q0 14-22 22Q6 42 6 28V6z" fill="#f4c891" stroke="#e8b070" stroke-width="2"/>
            <path d="M28 4L46 9v19q0 11-18 19z" fill="#fbdcae"/>
            <path d="M16 30l-2-10 6 4 8-9 8 9 6-4-2 10z" fill="#a86b2c"/>
            <path d="M0 44l8-8h40l8 8-6 2v6H6v-6z" fill="#ebbd84"/>
            <path d="M28 58l-10-6h20z" fill="#e3ad70"/>
            <text x="28" y="50" text-anchor="middle" font-size="10" fill="#b9864c">VIP</text>
        </svg>
        <div class="msg">试用版保存后将添加水印<br>开通VIP即可去除水印！</div>
        <button class="btn openvip" type="button">立即开通VIP</button>
    </div>
    <div class="wm-act">激活 Windows</div>
    <div class="wm-sub">转到“设置”以激活 Windows。</div>
    <svg class="jg-logo" width="42" height="40" fill="none"><path d="M40 1C22 1 4 12 2 24c-1 9 12 13 24 10" stroke="#5fa7de" stroke-width="4"/><path d="M30 12C18 12 11 19 12 24c1 4 8 4 14 2" stroke="#3f86c9" stroke-width="3"/><path d="M6 36c10 3 22 0 30-8" stroke="#8ccb6a" stroke-width="3"/></svg>
    <div class="jg-cn">极光下载站</div>
    <div class="jg-en">www.xz7.com</div>
</div>
</body>
</html>
